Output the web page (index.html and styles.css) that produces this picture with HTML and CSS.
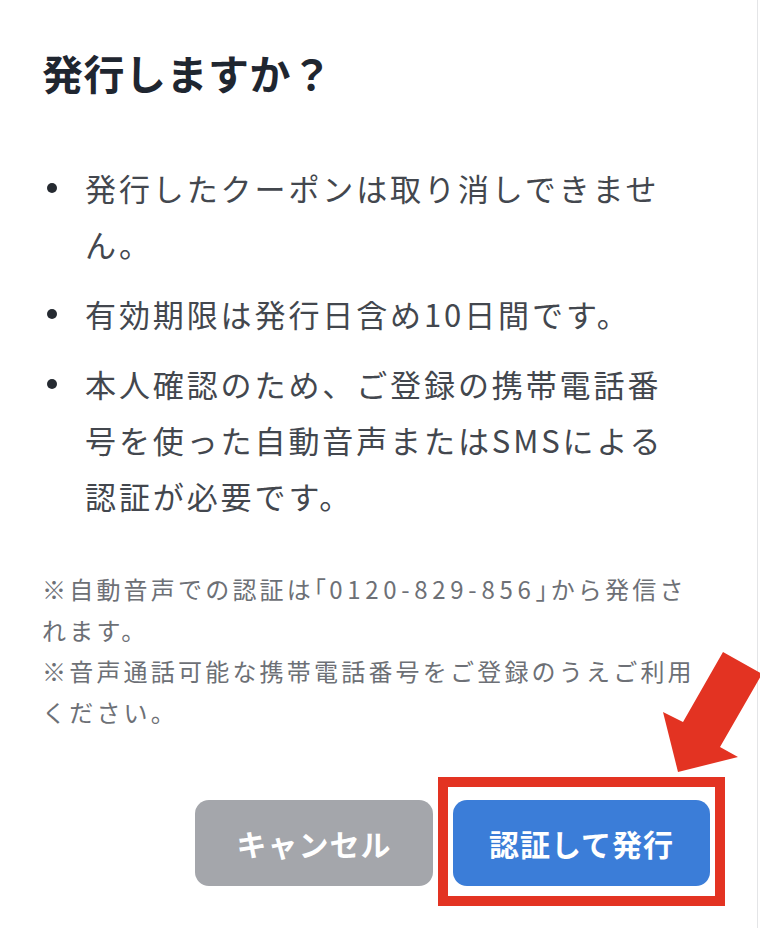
FILE: index.html
```html
<!DOCTYPE html>
<html lang="ja">
<head>
<meta charset="utf-8">
<title>発行しますか？</title>
<link rel="stylesheet" href="styles.css">
</head>
<body>
<div class="dialog">
  <h1 class="title">発行しますか？</h1>
  <ul class="points">
    <li><span class="dot"></span><span class="txt">発行したクーポンは取り消しできません。</span></li>
    <li><span class="dot"></span><span class="txt">有効期限は発行日含め10日間です。</span></li>
    <li><span class="dot"></span><span class="txt">本人確認のため、ご登録の携帯電話番号を使った自動音声またはSMSによる認証が必要です。</span></li>
  </ul>
  <div class="notes">
    <p>※自動音声での認証は「<span class="tel">0120-829-856</span>」から発信されます。</p>
    <p>※音声通話可能な携帯電話番号をご登録のうえご利用ください。</p>
  </div>
  <div class="actions">
    <button class="btn btn-cancel" type="button">キャンセル</button>
    <div class="highlight">
      <button class="btn btn-primary" type="button">認証して発行</button>
    </div>
  </div>
  <svg class="arrow" width="110" height="140" viewBox="650 640 110 140" aria-hidden="true">
    <polygon points="723,652 762,674 720,747 738,757 678,772 663,712 683,722" fill="#e33322"/>
  </svg>
</div>
</body>
</html>
```

FILE: styles.css
```css
html, body {
  margin: 0;
  padding: 0;
  background: #ffffff;
}

body {
  font-family: "Noto Sans CJK JP", "Noto Sans", sans-serif;
  width: 760px;
  height: 928px;
  overflow: hidden;
}

.dialog {
  position: relative;
  box-sizing: border-box;
  width: 758px;
  height: 928px;
  padding: 0 32px 0 42px;
  border-right: 1px solid #e4e5e7;
  background: #ffffff;
}

.title {
  margin: 0;
  padding-top: 47px;
  font-size: 41px;
  line-height: 50px;
  font-weight: 700;
  color: #1f2630;
  letter-spacing: 0.5px;
}

.points {
  list-style: none;
  margin: 63px 36px 0 0;
  padding: 0;
}

.points li {
  display: flex;
  align-items: flex-start;
  margin-top: 14px;
}

.points li:first-child {
  margin-top: 0;
}

.dot {
  flex: none;
  width: 10px;
  height: 10px;
  border-radius: 50%;
  background: #252a31;
  margin: 23px 28px 0 5px;
}

.txt {
  font-size: 31px;
  line-height: 56px;
  letter-spacing: 2.9px;
  color: #43474e;
}

.notes {
  margin: 44px 26px 0 0;
  color: #6d7076;
  font-size: 24px;
  line-height: 41px;
  letter-spacing: 3.2px;
  font-feature-settings: "halt";
}

.notes p {
  margin: 0;
}

.tel {
  letter-spacing: 4.7px;
}

.actions {
  display: flex;
  justify-content: flex-end;
  align-items: flex-start;
  gap: 5px;
  margin-top: 45px;
}

.btn {
  border: none;
  font-family: "Noto Sans CJK JP", "Noto Sans", sans-serif;
  font-weight: 700;
  font-size: 30px;
  color: #ffffff;
  height: 86px;
  border-radius: 14px;
  letter-spacing: 1px;
  padding: 0;
}

.btn-cancel {
  width: 238px;
  margin-top: 23px;
  background: #a4a6ab;
}

.highlight {
  border: 10px solid #e33322;
  padding: 13px 5px 10px 5px;
}

.btn-primary {
  display: block;
  width: 257px;
  background: #3b7dd8;
}

.arrow {
  position: absolute;
  left: 650px;
  top: 640px;
}
```
